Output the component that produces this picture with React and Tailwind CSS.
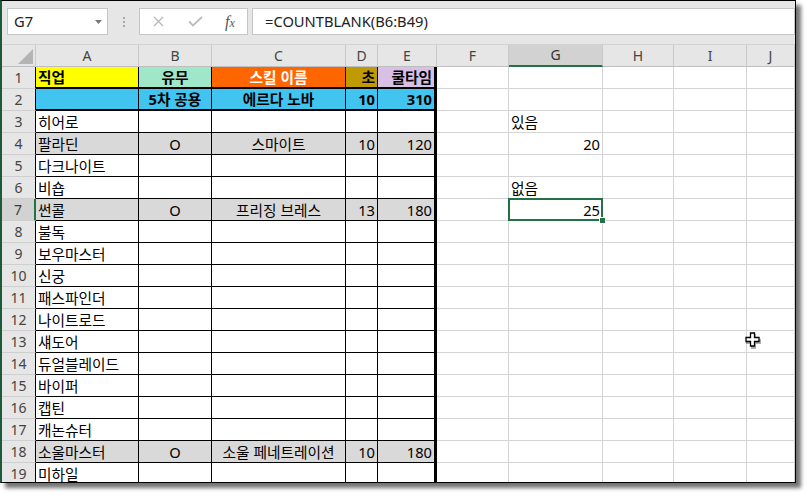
import React from "react";

const COLS = ["A", "B", "C", "D", "E", "F", "G", "H", "I", "J"];

const Y = "bg-[#ffff00]";
const MINT = "bg-[#a0e6c9]";
const OR = "bg-[#ff6600]";
const GOLD = "bg-[#bf9a00]";
const LAV = "bg-[#d8bfe5]";
const BLUE = "bg-[#41c5f0]";
const GRAY = "bg-[#d9d9d9]";

const ROWS = [
  {
    n: 1,
    bold: true,
    thick: true,
    cells: [
      { t: "직업", bg: Y, al: "l" },
      { t: "유무", bg: MINT, al: "c" },
      { t: "스킬 이름", bg: OR, al: "c", white: true },
      { t: "초", bg: GOLD, al: "r" },
      { t: "쿨타임", bg: LAV, al: "r" },
    ],
  },
  {
    n: 2,
    bold: true,
    thick: true,
    cells: [
      { t: "", bg: BLUE, al: "l" },
      { t: "5차 공용", bg: BLUE, al: "c" },
      { t: "에르다 노바", bg: BLUE, al: "c" },
      { t: "10", bg: BLUE, al: "r" },
      { t: "310", bg: BLUE, al: "r" },
    ],
  },
  { n: 3, a: "히어로", g: { t: "있음", al: "l" } },
  { n: 4, a: "팔라딘", fill: true, b: "O", c: "스마이트", d: "10", e: "120", g: { t: "20", al: "r" } },
  { n: 5, a: "다크나이트" },
  { n: 6, a: "비숍", g: { t: "없음", al: "l" } },
  { n: 7, a: "썬콜", fill: true, b: "O", c: "프리징 브레스", d: "13", e: "180", g: { t: "25", al: "r", sel: true } },
  { n: 8, a: "불독" },
  { n: 9, a: "보우마스터" },
  { n: 10, a: "신궁" },
  { n: 11, a: "패스파인더" },
  { n: 12, a: "나이트로드" },
  { n: 13, a: "섀도어" },
  { n: 14, a: "듀얼블레이드" },
  { n: 15, a: "바이퍼" },
  { n: 16, a: "캡틴" },
  { n: 17, a: "캐논슈터" },
  { n: 18, a: "소울마스터", fill: true, b: "O", c: "소울 페네트레이션", d: "10", e: "180" },
  { n: 19, a: "미하일" },
];

function alignClass(al) {
  if (al === "c") return "justify-center";
  if (al === "r") return "justify-end";
  return "justify-start";
}

function buildCells(row) {
  if (row.cells) return row.cells;
  const bg = row.fill ? GRAY : "bg-white";
  return [
    { t: row.a || "", bg, al: "l" },
    { t: row.b || "", bg, al: "c" },
    { t: row.c || "", bg, al: "c" },
    { t: row.d || "", bg, al: "r" },
    { t: row.e || "", bg, al: "r" },
  ];
}

function TableCell({ cell, isE, thick, bold }) {
  return (
    <div
      className={[
        "flex items-center px-[2px] pt-[1px] overflow-hidden whitespace-nowrap text-[14.7px] leading-none border-r-black border-b-black",
        isE ? "border-r-[3px]" : "border-r",
        thick ? "border-b-2" : "border-b",
        alignClass(cell.al),
        cell.bg,
        bold ? "font-bold" : "font-normal",
        cell.white ? "text-white" : "text-black",
      ].join(" ")}
    >
      {cell.t}
    </div>
  );
}

function GridCell({ content }) {
  if (content && content.sel) {
    return (
      <div className="relative flex items-center justify-end px-[2px] pt-[1px] whitespace-nowrap text-[14.7px] leading-none text-black bg-white border-r border-b border-r-[#d4d4d4] border-b-[#d4d4d4]">
        {content.t}
        <div className="absolute -left-[1px] -top-[1px] -right-[1px] -bottom-[1px] border-2 border-[#217346]" />
        <div className="absolute -right-[4px] -bottom-[4px] w-[7px] h-[7px] bg-[#217346] border border-white" />
      </div>
    );
  }
  return (
    <div
      className={[
        "flex items-center px-[2px] pt-[1px] whitespace-nowrap text-[14.7px] leading-none text-black bg-white border-r border-b border-r-[#d4d4d4] border-b-[#d4d4d4]",
        content ? alignClass(content.al) : "",
      ].join(" ")}
    >
      {content ? content.t : ""}
    </div>
  );
}

function RowHeader({ n }) {
  const sel = n === 7;
  return (
    <div
      className={[
        "flex items-center justify-center pt-[1px] text-[14px] leading-none font-['Noto_Sans',sans-serif] border-b border-b-[#cfcfcf]",
        sel
          ? "bg-[#d2d2d2] text-[#3a3a3a] border-r-2 border-r-[#217346]"
          : "bg-[#e6e6e6] text-[#444] border-r border-r-black",
      ].join(" ")}
    >
      {n}
    </div>
  );
}

function ColHeader({ c }) {
  const sel = c === "G";
  return (
    <div
      className={[
        "flex items-center justify-center text-[14px] leading-none font-['Noto_Sans',sans-serif] border-r border-r-[#c8c8c8]",
        sel
          ? "bg-[#d2d2d2] text-[#333] border-b-2 border-b-[#217346]"
          : "bg-[#e6e6e6] text-[#444] border-b border-b-[#bfbfbf]",
      ].join(" ")}
    >
      {c}
    </div>
  );
}

function FormulaBar() {
  return (
    <div className="h-[44px] shrink-0 bg-[#e6e6e6] border-b border-b-[#d2d2d2] flex items-start pt-[7px] pl-[5px]">
      <div className="relative w-[101px] h-[27px] bg-white border border-[#c6c6c6] flex items-center pl-[6px] text-[14.7px] text-[#222] font-['Noto_Sans',sans-serif]">
        G7
        <svg className="absolute left-[87px] top-[11px]" width="7" height="4" viewBox="0 0 7 4">
          <polygon points="0,0 7,0 3.5,4" fill="#777" />
        </svg>
      </div>
      <div className="w-[31px] h-[27px] flex flex-col items-center justify-center gap-[2px]">
        <div className="w-[2px] h-[2px] bg-[#a8a8a8]" />
        <div className="w-[2px] h-[2px] bg-[#a8a8a8]" />
        <div className="w-[2px] h-[2px] bg-[#a8a8a8]" />
      </div>
      <div className="w-[109px] h-[27px] bg-white border border-[#c6c6c6] flex items-center">
        <span className="w-[37px] flex justify-center">
          <svg width="11" height="11" viewBox="0 0 11 11">
            <path d="M1 1 L10 10 M10 1 L1 10" stroke="#b8b8b8" strokeWidth="1.3" fill="none" />
          </svg>
        </span>
        <span className="w-[36px] flex justify-center">
          <svg width="15" height="11" viewBox="0 0 15 11">
            <path d="M1 5.5 L5 9.5 L14 1" stroke="#bcbcbc" strokeWidth="1.8" fill="none" />
          </svg>
        </span>
        <span className="w-[34px] flex justify-center items-baseline italic font-['Liberation_Serif',serif] text-[#555] text-[16px] leading-none">
          f<span className="text-[12px]">x</span>
        </span>
      </div>
      <div className="ml-[4px] flex-1 h-[27px] bg-white border border-[#c6c6c6] flex items-center pl-[12px] text-[14.7px] text-[#222] font-['Noto_Sans',sans-serif]">
        =COUNTBLANK(B6:B49)
      </div>
    </div>
  );
}

export default function App() {
  return (
    <div className="relative w-[808px] h-[495px] bg-white overflow-hidden font-['Noto_Sans','Noto_Sans_CJK_KR',sans-serif]">
      <div className="w-[796px] h-[483px] bg-white border border-black border-l-2 border-l-[#1d5a39] shadow-[5px_5px_4px_rgba(0,0,0,0.55)] flex flex-col overflow-hidden">
        <FormulaBar />
        <div className="grid grid-cols-[34px_103px_73px_134px_32px_59px_72px_94px_71px_73px_48px] auto-rows-[22px]">
          <div className="relative bg-[#e6e6e6] border-r border-b border-r-[#c8c8c8] border-b-[#bfbfbf]">
            <svg className="absolute left-[16px] top-[4px]" width="15" height="15" viewBox="0 0 15 15">
              <polygon points="15,0 15,15 0,15" fill="#b4b4b4" />
            </svg>
          </div>
          {COLS.map((c) => (
            <ColHeader key={c} c={c} />
          ))}
          {ROWS.map((row) => {
            const cells = buildCells(row);
            return (
              <React.Fragment key={row.n}>
                <RowHeader n={row.n} />
                {cells.map((cell, i) => (
                  <TableCell key={i} cell={cell} isE={i === 4} thick={row.thick} bold={row.bold} />
                ))}
                <GridCell />
                <GridCell content={row.g} />
                <GridCell />
                <GridCell />
                <GridCell />
              </React.Fragment>
            );
          })}
        </div>
      </div>
      <svg className="absolute left-[745px] top-[332px]" width="17" height="17" viewBox="0 0 17 17">
        <polygon points="6,2 11,2 11,7 16,7 16,12 11,12 11,17 6,17 6,12 1,12 1,7 6,7" fill="#555" opacity="0.5" />
        <polygon points="5,1 10,1 10,6 15,6 15,11 10,11 10,16 5,16 5,11 0,11 0,6 5,6" fill="none" />
        <polygon points="5.5,1 9.5,1 9.5,5.5 14,5.5 14,9.5 9.5,9.5 9.5,14 5.5,14 5.5,9.5 1,9.5 1,5.5 5.5,5.5" fill="#fff" stroke="#000" strokeWidth="1.3" />
      </svg>
    </div>
  );
}
